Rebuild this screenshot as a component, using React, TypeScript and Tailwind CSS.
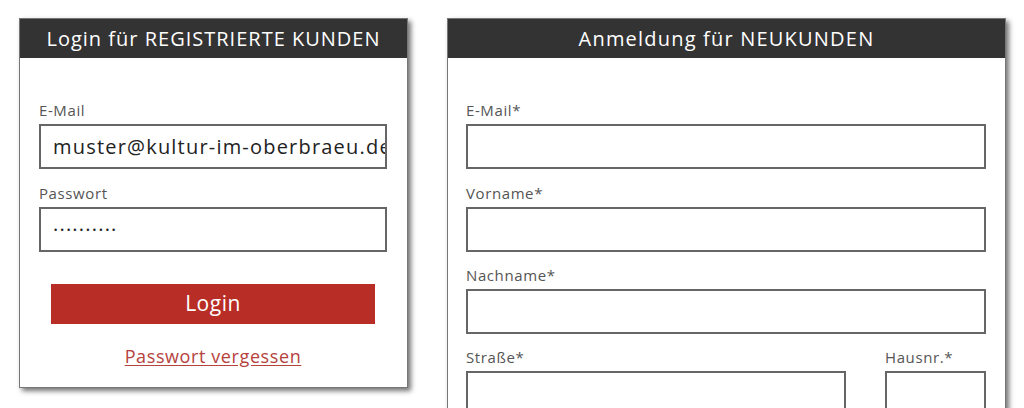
import React from "react";

const font = { fontFamily: '"Open Sans", "Noto Sans", sans-serif' };

function Field({ label, value, className }: { label: string; value?: string; className?: string }) {
  return (
    <div className={className}>
      <label className="block text-[15px] leading-[18px] tracking-[0.6px] text-[#555] mb-[5px]">{label}</label>
      <div className="h-[45px] border-2 border-[#666] bg-white px-[12px] flex items-center overflow-hidden whitespace-nowrap text-[20px] tracking-[1.2px] text-[#222]">
        {value}
      </div>
    </div>
  );
}

export default function App() {
  return (
    <div className="h-[408px] w-[1024px] overflow-hidden bg-white" style={font}>
      <div className="flex items-start gap-[39px] pl-[19px] pt-[18px]">
        {/* bestandskunden */}
        <div className="w-[389px] bg-white border border-[#777] shadow-[3px_3px_5px_rgba(0,0,0,0.55)]">
          <div className="h-[39px] bg-[#333] text-white text-[20px] tracking-[1px] flex items-center justify-center">
            Login für REGISTRIERTE KUNDEN
          </div>
          <div className="pt-[43px] pl-[19px] pr-[20px] pb-[19px]">
            <Field label="E-Mail" value="muster@kultur-im-oberbraeu.de" className="mb-[15px]" />
            <Field label="Passwort" value="··········" />
            <div className="mx-[12px] mt-[32px] h-[40px] bg-[#b82e26] text-white text-[21px] tracking-[0.5px] flex items-center justify-center">
              Login
            </div>
            <div className="mt-[20px] text-center text-[18px] leading-[24px] tracking-[0.6px]">
              <a className="text-[#b5423c] underline underline-offset-2">Passwort vergessen</a>
            </div>
          </div>
        </div>

        {/* neukunden */}
        <div className="w-[559px] bg-white border border-[#777] shadow-[3px_3px_5px_rgba(0,0,0,0.55)]">
          <div className="h-[39px] bg-[#333] text-white text-[20px] tracking-[1.2px] flex items-center justify-center">
            Anmeldung für NEUKUNDEN
          </div>
          <div className="pt-[43px] pl-[18px] pr-[19px] pb-[19px]">
            <Field label="E-Mail*" className="mb-[15px]" />
            <Field label="Vorname*" className="mb-[14px]" />
            <Field label="Nachname*" className="mb-[14px]" />
            <div className="flex gap-[39px]">
              <Field label="Straße*" className="w-[380px]" />
              <Field label="Hausnr.*" className="flex-1" />
            </div>
          </div>
        </div>
      </div>
    </div>
  );
}
